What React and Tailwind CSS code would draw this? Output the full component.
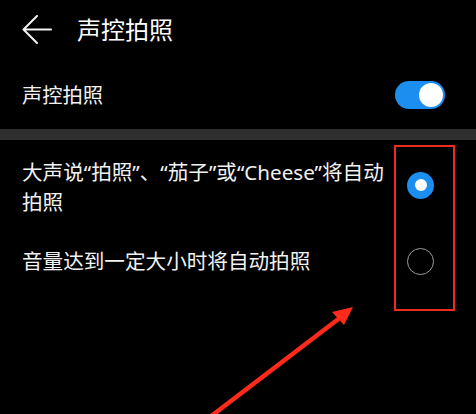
import React from "react";

const font = { fontFamily: '"Noto Sans", "Noto Sans CJK SC", sans-serif' };

export default function App() {
  return (
    <div
      className="relative w-[476px] h-[414px] bg-black text-[#f2f2f2] overflow-hidden"
      style={font}
    >
      {/* header */}
      <div className="flex items-center h-[60px] pl-[22px]">
        <svg width="30" height="30" viewBox="0 0 30 30" className="shrink-0">
          <path
            d="M15 1 L1.5 14.5 L15 28 M1.5 14.5 H29"
            fill="none"
            stroke="#f2f2f2"
            strokeWidth="2"
            strokeLinecap="round"
            strokeLinejoin="round"
          />
        </svg>
        <div className="ml-[25px] text-[24px] leading-[30px] text-white">声控拍照</div>
      </div>

      {/* switch row */}
      <div className="flex items-center justify-between h-[69px] pl-[22px] pr-[31px]">
        <div className="text-[20.3px] leading-[28px]">声控拍照</div>
        <div className="w-[50px] h-[28px] rounded-full bg-[#1b8ef0] flex items-center justify-end p-[2px]">
          <div className="w-[24px] h-[24px] rounded-full bg-white" />
        </div>
      </div>

      {/* divider band */}
      <div className="h-[11px] bg-[#2f2f2f]" />

      {/* options */}
      <div className="pt-[17px] pl-[22px] pr-[42px]">
        <div className="flex items-center justify-between">
          <div className="text-[20.6px] leading-[30px]">
            大声说“拍照”、“茄子”或“Cheese”将自动
            <br />
            拍照
          </div>
          <div className="w-[27px] h-[27px] rounded-full bg-[#1b8ef0] flex items-center justify-center mt-[-4px]">
            <div className="w-[12px] h-[12px] rounded-full bg-white" />
          </div>
        </div>
        <div className="flex items-center justify-between mt-[29px]">
          <div className="text-[20.6px] leading-[30px]">音量达到一定大小时将自动拍照</div>
          <div className="w-[27px] h-[27px] rounded-full border-[1.5px] border-[#9c9c9c]" />
        </div>
      </div>

      {/* annotation box */}
      <div className="absolute left-[394px] top-[145px] w-[61px] h-[166px] border-2 border-[#ee2a22]" />

      {/* annotation arrow */}
      <svg className="absolute left-0 top-0" width="476" height="414" viewBox="0 0 476 414">
        <path d="M210 417 L341 317" stroke="#ff2a1a" strokeWidth="4.5" strokeLinecap="round" />
        <polygon points="353,307 332,312 344,325" fill="#ff2a1a" />
      </svg>
    </div>
  );
}
